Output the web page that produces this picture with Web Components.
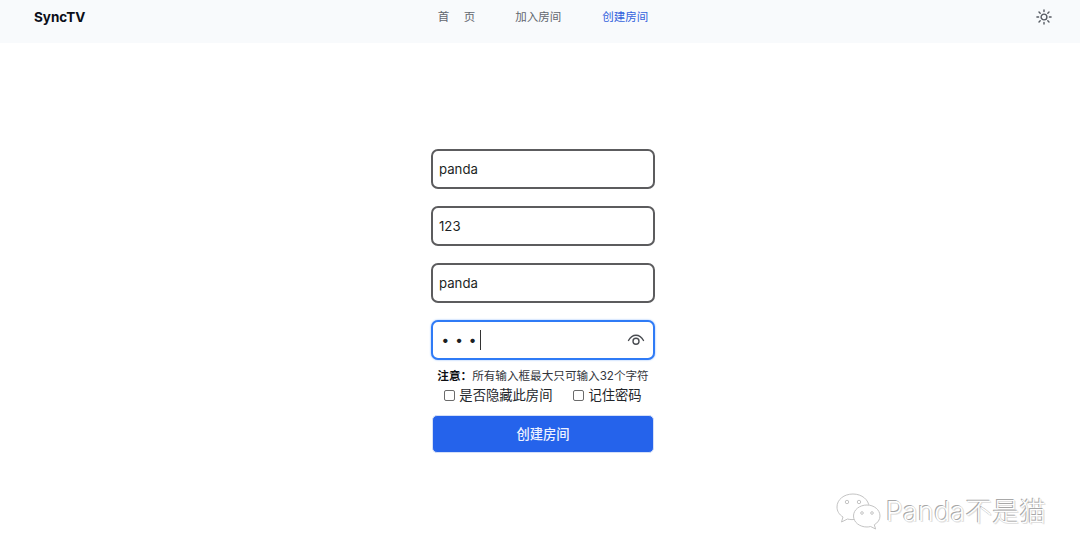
<!DOCTYPE html>
<html>
<head>
<meta charset="utf-8">
<style>
  html, body { margin: 0; height: 100%; background: #fff; }
  body { font-family: Inter, "Noto Sans CJK SC", sans-serif; }
</style>
</head>
<body>
<app-shell>
  <top-bar></top-bar>
  <room-form></room-form>
  <mark-stamp></mark-stamp>
</app-shell>

<script>
const FONT = 'Inter, "Noto Sans CJK SC", sans-serif';

class AppShell extends HTMLElement {
  constructor() {
    super();
    this.attachShadow({ mode: "open" });
    this.shadowRoot.innerHTML = `
      <style>
        :host { display: block; position: relative; width: 1080px; height: 560px; overflow: hidden; background: #fff; font-family: ${FONT}; }
      </style>
      <slot></slot>
    `;
  }
}

class TopBar extends HTMLElement {
  constructor() {
    super();
    this.attachShadow({ mode: "open" });
    this.shadowRoot.innerHTML = `
      <style>
        :host { display: grid; grid-template-columns: 1fr auto 1fr; height: 43px; background: #f8fafc; padding: 0 28px 0 34px; box-sizing: border-box; }
        .logo { font-size: 13.5px; font-weight: 700; color: #0b0f19; line-height: 34px; }
        nav { display: flex; gap: 40px; font-size: 11.5px; line-height: 34px; color: #62676f; margin-left: 0; }
        nav a.first { letter-spacing: 14.5px; margin-right: -14.5px; }
        nav a.on { color: #3563dc; margin-left: 1px; }
        .tools { display: flex; justify-content: flex-end; align-items: flex-start; padding-top: 9px; }
        svg { width: 16px; height: 16px; stroke: #555a62; fill: none; stroke-width: 1.4; stroke-linecap: round; }
      </style>
      <div class="logo">SyncTV</div>
      <nav><a class="first">首页</a><a>加入房间</a><a class="on">创建房间</a></nav>
      <div class="tools">
        <svg viewBox="0 0 16 16">
          <circle cx="8" cy="8" r="2.9"/>
          <path d="M8 .9v1.7M8 13.4v1.7M.9 8h1.7M13.4 8h1.7M3 3l1.2 1.2M11.8 11.8 13 13M3 13l1.2-1.2M11.8 4.2 13 3"/>
        </svg>
      </div>
    `;
  }
}

class FieldBox extends HTMLElement {
  constructor() {
    super();
    this.attachShadow({ mode: "open" });
    this.shadowRoot.innerHTML = `
      <style>
        :host { display: flex; align-items: center; box-sizing: border-box; height: 40px; width: 224px; padding: 0 6px 1px 6px; border: 2px solid #5c5c5e; border-radius: 7px; background: #fff; font-size: 13.2px; color: #1c1f24; }
        :host([focused]) { border-color: #2f7bf6; box-shadow: 0 0 2px #7fb0fa; }
        .dots { font-size: 14px; letter-spacing: 7px; display: none; margin-left: 3px; font-weight: 700; }
        .caret { display: none; width: 1px; height: 20px; background: #333; margin-left: -3px; }
        .eye { display: none; margin-left: auto; margin-right: 2px; width: 18px; height: 14px; stroke: #4a4d52; fill: none; stroke-width: 1.4; stroke-linecap: round; }
        :host([secret]) .dots, :host([secret]) .caret, :host([secret]) .eye { display: block; }
      </style>
      <slot></slot>
      <span class="dots">•••</span><span class="caret"></span>
      <svg class="eye" viewBox="0 0 18 14">
        <path d="M1.5 7.5C3.5 3.8 6 2.2 9 2.2s5.500 1.600 7.500 5.300"/>
        <circle cx="9" cy="8.300" r="3"/>
      </svg>
    `;
  }
}

class TickBox extends HTMLElement {
  constructor() {
    super();
    this.attachShadow({ mode: "open" });
    this.shadowRoot.innerHTML = `
      <style>
        :host { display: inline-flex; align-items: center; gap: 4px; font-size: 13.3px; color: #22252a; }
        i { width: 9px; height: 9px; border: 1px solid #6b6b6b; border-radius: 2px; background: #fff; }
      </style>
      <i></i><slot></slot>
    `;
  }
}

class RoomForm extends HTMLElement {
  constructor() {
    super();
    this.attachShadow({ mode: "open" });
    this.shadowRoot.innerHTML = `
      <style>
        :host { display: flex; flex-direction: column; align-items: center; width: 224px; margin: 106px 0 0 431px; }
        .fields { display: flex; flex-direction: column; gap: 17px; }
        .note { margin-top: 9px; font-size: 11.6px; line-height: 15px; color: #33363c; white-space: nowrap; }
        .note b { color: #0c0e12; }
        .ticks { display: flex; gap: 21px; margin-top: 2px; line-height: 18px; white-space: nowrap; }
        button { margin-top: 11px; width: 222px; height: 38px; padding: 0 0 2px; border: 1px solid #d4dff8; border-radius: 5px; background: #2563eb; color: #eef2ff; font: 500 13.3px ${FONT}; }
      </style>
      <div class="fields">
        <field-box>panda</field-box>
        <field-box>123</field-box>
        <field-box>panda</field-box>
        <field-box secret focused></field-box>
      </div>
      <div class="note"><b>注意：</b>所有输入框最大只可输入32个字符</div>
      <div class="ticks">
        <tick-box>是否隐藏此房间</tick-box>
        <tick-box>记住密码</tick-box>
      </div>
      <button>创建房间</button>
    `;
  }
}

// watermark sits over the page corner
class MarkStamp extends HTMLElement {
  constructor() {
    super();
    this.attachShadow({ mode: "open" });
    this.shadowRoot.innerHTML = `
      <style>
        :host { position: absolute; left: 835px; top: 491px; display: flex; align-items: center; gap: 3px; }
        span { font-size: 26.6px; line-height: 40px; letter-spacing: .4px; color: #fff; text-shadow: -1px -1px 0 #a8a8a8, 0 0 1px #b0b0b0, 1px 1px 0 #e6e6e6; font-weight: 300; white-space: nowrap; }
        svg { width: 48px; height: 40px; fill: #fff; stroke: #c4c4c4; stroke-width: 1; }
      </style>
      <svg viewBox="0 0 48 40">
        <path d="M18 3C9 3 2 8.500 2 16c0 4 2 7.500 6 10l-1.500 5 6-3c1.500 .4 3 .6 4.500 .6C27 28.600 34 23 34 16S27 3 18 3Z"/>
        <path d="M32 14c-7.500 0-13.500 4.800-13.500 11S24.500 36 32 36c1.200 0 2.400-.2 3.600-.5l5 2.500-1.300-4.200c3.500-2 5.700-5.200 5.700-8.800 0-6.200-6-11-13-11Z"/>
        <circle cx="12" cy="11" r="1.700"/><circle cx="24" cy="11" r="1.700"/>
        <circle cx="27" cy="22" r="1.300"/><circle cx="37" cy="22" r="1.300"/>
      </svg>
      <span>Panda不是猫</span>
    `;
  }
}

customElements.define("app-shell", AppShell);
customElements.define("top-bar", TopBar);
customElements.define("field-box", FieldBox);
customElements.define("tick-box", TickBox);
customElements.define("room-form", RoomForm);
customElements.define("mark-stamp", MarkStamp);
</script>
</body>
</html>
